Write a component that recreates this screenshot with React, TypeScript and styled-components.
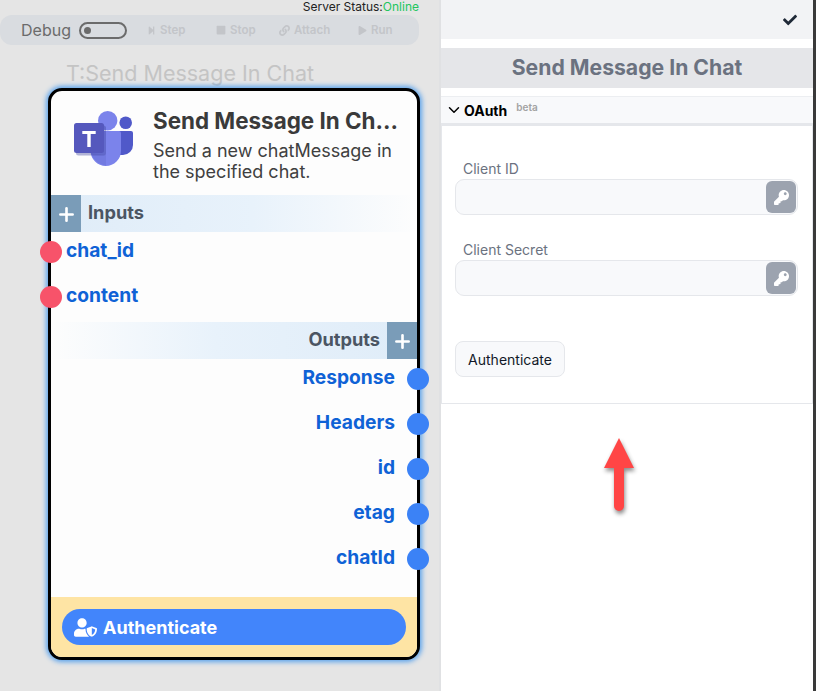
import React from 'react';
import styled, { createGlobalStyle } from 'styled-components';
import { Plus, ChevronDown } from 'lucide-react';
import { FaKey, FaUserShield, FaCheck, FaPlay, FaStop, FaLink, FaStepForward } from 'react-icons/fa';

const GlobalStyle = createGlobalStyle`
  html, body {
    margin: 0;
    padding: 0;
    height: 100%;
    overflow: hidden;
    font-family: Inter, "Liberation Sans", sans-serif;
  }
  #root { height: 100%; }
`;

const Page = styled.div`
  display: flex;
  width: 816px;
  height: 691px;
  background: #fff;
`;

const Canvas = styled.div`
  width: 439px;
  flex-shrink: 0;
  background: #e5e5e5;
  display: flex;
  flex-direction: column;
  border-right: 2px solid #e0e1e3;
`;

const ServerStatus = styled.div`
  height: 15px;
  padding-right: 20px;
  text-align: right;
  font-size: 12px;
  line-height: 14px;
  color: #222;
`;

const Online = styled.span`
  color: #22c55e;
`;

const DebugBar = styled.div`
  width: 419px;
  height: 30px;
  background: #d9dce0;
  border-radius: 12px;
  display: flex;
  align-items: center;
  padding-left: 21px;
  box-sizing: border-box;
`;

const DebugLabel = styled.span`
  font-size: 16px;
  color: #6b6b6b;
  margin-right: 8px;
`;

const Toggle = styled.div`
  width: 41px;
  height: 13px;
  border: 2px solid #6b6b6b;
  border-radius: 9px;
  display: flex;
  align-items: center;
  padding-left: 3px;
  margin-right: 20px;
`;

const ToggleKnob = styled.div`
  width: 7px;
  height: 7px;
  border-radius: 50%;
  background: #6b6b6b;
`;

const DebugAction = styled.span<{ $width: number }>`
  width: ${p => p.$width}px;
  display: flex;
  align-items: center;
  gap: 4px;
  font-size: 11.5px;
  font-weight: 600;
  color: #c3c5c9;
`;

const NodeTitle = styled.div`
  margin: 14px 0 0 66px;
  height: 29px;
  font-size: 21.5px;
  line-height: 29px;
  color: #c4c4c4;
`;

const NodeCard = styled.div`
  position: relative;
  margin-left: 48px;
  width: 372px;
  height: 572px;
  box-sizing: border-box;
  background: #fdfdfd;
  border: 3px solid #000;
  border-radius: 14px;
  box-shadow: 0 0 5px 2px #5ba3ec;
  display: flex;
  flex-direction: column;
`;

const NodeHead = styled.div`
  height: 104px;
  display: flex;
  flex-shrink: 0;
`;

const LogoBox = styled.div`
  width: 102px;
  flex-shrink: 0;
  padding: 20px 0 0 22px;
  box-sizing: border-box;
`;

const HeadText = styled.div`
  flex: 1;
  min-width: 0;
  padding-top: 16px;
  padding-right: 14px;
`;

const HeadTitle = styled.div`
  font-size: 22.4px;
  line-height: 28px;
  font-weight: 700;
  color: #3a3a3a;
  white-space: nowrap;
`;

const HeadDesc = styled.div`
  margin-top: 5px;
  font-size: 18px;
  line-height: 21px;
  color: #404040;
`;

const Section = styled.div<{ $right?: boolean }>`
  height: 37px;
  flex-shrink: 0;
  display: flex;
  align-items: center;
  justify-content: ${p => (p.$right ? 'flex-end' : 'flex-start')};
  background: linear-gradient(
    ${p => (p.$right ? 'to left' : 'to right')},
    #dfecf8,
    #e8f2fb 55%,
    #fdfdfd 100%
  );
`;

const SectionLabel = styled.span`
  font-size: 18.2px;
  font-weight: 700;
  color: #4b5563;
  margin: 0 7px 3px;
`;

const PlusBox = styled.div`
  width: 30px;
  height: 37px;
  box-sizing: border-box;
  padding-top: 2px;
  background: #7a9cb8;
  display: flex;
  align-items: center;
  justify-content: center;
  color: #fff;
`;

const Pins = styled.div<{ $right?: boolean }>`
  display: flex;
  flex-direction: column;
  gap: 15px;
  box-sizing: border-box;
  padding-top: 4px;
  height: ${p => (p.$right ? 238 : 90)}px;
  flex-shrink: 0;
`;

const Pin = styled.div<{ $right?: boolean }>`
  position: relative;
  height: 30px;
  line-height: 28px;
  font-size: 19.2px;
  font-weight: 700;
  color: #0f62d6;
  text-align: ${p => (p.$right ? 'right' : 'left')};
  padding: ${p => (p.$right ? '0 22px 0 0' : '0 0 0 15px')};
`;

const Dot = styled.div<{ $right?: boolean }>`
  position: absolute;
  top: 5px;
  width: 22px;
  height: 22px;
  border-radius: 50%;
  background: ${p => (p.$right ? '#3b82f6' : '#f7536a')};
  ${p => (p.$right ? 'right: -12px;' : 'left: -11px;')}
`;

const NodeFoot = styled.div`
  margin-top: auto;
  height: 60px;
  background: #fee4a4;
  border-radius: 0 0 11px 11px;
  display: flex;
  align-items: center;
  padding: 0 11px;
`;

const NodeAuth = styled.div`
  flex: 1;
  height: 36px;
  border-radius: 18px;
  background: #4285fb;
  display: flex;
  align-items: center;
  gap: 6px;
  padding-left: 12px;
  color: #fff;
  font-size: 18px;
  font-weight: 700;
`;

const Panel = styled.div`
  width: 372px;
  flex-shrink: 0;
  display: flex;
  flex-direction: column;
  background: #fff;
`;

const PanelTop = styled.div`
  height: 39px;
  background: #f2f3f5;
  display: flex;
  align-items: center;
  justify-content: flex-end;
  padding-right: 16px;
  color: #1f2937;
`;

const PanelTitle = styled.div`
  margin-top: 9px;
  height: 40px;
  background: #e5e6e9;
  text-align: center;
  font-size: 21.2px;
  line-height: 39px;
  font-weight: 700;
  color: #6b7280;
`;

const Accordion = styled.div`
  margin-top: 8px;
  height: 26px;
  background: #f8f9fb;
  border-top: 1px solid #eceef1;
  border-bottom: 3px solid #e5e7eb;
  display: flex;
  align-items: center;
  padding-left: 4px;
  color: #000;
`;

const AccordionLabel = styled.span`
  font-size: 14px;
  font-weight: 700;
  margin-left: 1px;
`;

const Beta = styled.span`
  align-self: flex-start;
  margin: 4px 0 0 9px;
  font-size: 10px;
  font-weight: 600;
  color: #a3a3a3;
`;

const AccordionBody = styled.div`
  height: 278px;
  box-sizing: border-box;
  border: 1px solid #e5e7eb;
  border-top: none;
  padding: 34px 14px 0 13px;
`;

const Field = styled.div`
  margin-bottom: 26px;
`;

const FieldLabel = styled.div`
  padding-left: 8px;
  height: 19px;
  font-size: 14px;
  line-height: 17px;
  color: #6b7280;
`;

const InputBox = styled.div`
  height: 36px;
  box-sizing: border-box;
  background: #f8f9fb;
  border: 1px solid #e5e7eb;
  border-radius: 9px;
  display: flex;
  justify-content: flex-end;
  padding: 1px;
`;

const KeyButton = styled.div`
  width: 30px;
  height: 32px;
  border-radius: 6px;
  background: #9ca3af;
  color: #fff;
  display: flex;
  align-items: center;
  justify-content: center;
`;

const AuthButton = styled.div`
  margin-top: 45px;
  width: 110px;
  height: 36px;
  box-sizing: border-box;
  background: #f8f9fb;
  border: 1px solid #e5e7eb;
  border-radius: 8px;
  display: flex;
  align-items: center;
  justify-content: center;
  font-size: 14px;
  color: #111827;
`;

const ArrowBox = styled.div`
  flex: 1;
  padding: 34px 0 0 163px;
`;

const Arrow = styled.svg`
  display: block;
  overflow: visible;
  filter: drop-shadow(1px 3px 2px rgba(0, 0, 0, 0.45));
`;

const Edge = styled.div`
  flex: 1;
  background: #3a3a3a;
`;

const TeamsLogo = () => (
  <svg width="60" height="55" viewBox="0 0 60 55">
    <circle cx="52.700" cy="11.700" r="6.300" fill="#5059c9" />
    <path d="M43 20h15a2 2 0 0 1 2 2v12a10 10 0 0 1-10 10h-7z" fill="#5059c9" />
    <circle cx="34.700" cy="9.700" r="9.700" fill="#7b83eb" />
    <path d="M19.500 20H46a2 2 0 0 1 2 2v17.800a15.200 15.200 0 0 1-30.400 0V22a2 2 0 0 1 2-2z" fill="#7b83eb" />
    <path d="M18 42c2.500 7 8 11.500 15 12.500L33 44z" fill="#6a71d6" opacity="0.5" />
    <rect x="3" y="14.500" width="30" height="30" rx="2.500" fill="#3f449b" opacity="0.4" />
    <rect x="1" y="12" width="30" height="30" rx="2.500" fill="#5558bd" />
    <path d="M22.700 20H9.300v3h5V36h3.400V23h5z" fill="#fff" />
  </svg>
);

const inputs = ['chat_id', 'content'];
const outputs = ['Response', 'Headers', 'id', 'etag', 'chatId'];

const App: React.FC = () => (
  <Page>
    <GlobalStyle />
    <Canvas>
      <ServerStatus>
        Server Status:<Online>Online</Online>
      </ServerStatus>
      <DebugBar>
        <DebugLabel>Debug</DebugLabel>
        <Toggle>
          <ToggleKnob />
        </Toggle>
        <DebugAction $width={69}><FaStepForward size={9} />Step</DebugAction>
        <DebugAction $width={63}><FaStop size={10} />Stop</DebugAction>
        <DebugAction $width={79}><FaLink size={11} />Attach</DebugAction>
        <DebugAction $width={50}><FaPlay size={9} />Run</DebugAction>
      </DebugBar>
      <NodeTitle>T:Send Message In Chat</NodeTitle>
      <NodeCard>
        <NodeHead>
          <LogoBox>
            <TeamsLogo />
          </LogoBox>
          <HeadText>
            <HeadTitle>Send Message In Ch...</HeadTitle>
            <HeadDesc>Send a new chatMessage in the specified chat.</HeadDesc>
          </HeadText>
        </NodeHead>
        <Section>
          <PlusBox><Plus size={21} strokeWidth={3} /></PlusBox>
          <SectionLabel>Inputs</SectionLabel>
        </Section>
        <Pins>
          {inputs.map(name => (
            <Pin key={name}>
              <Dot />
              {name}
            </Pin>
          ))}
        </Pins>
        <Section $right>
          <SectionLabel>Outputs</SectionLabel>
          <PlusBox><Plus size={21} strokeWidth={3} /></PlusBox>
        </Section>
        <Pins $right>
          {outputs.map(name => (
            <Pin key={name} $right>
              {name}
              <Dot $right />
            </Pin>
          ))}
        </Pins>
        <NodeFoot>
          <NodeAuth>
            <FaUserShield size={23} />
            Authenticate
          </NodeAuth>
        </NodeFoot>
      </NodeCard>
    </Canvas>
    <Panel>
      <PanelTop><FaCheck size={14} /></PanelTop>
      <PanelTitle>Send Message In Chat</PanelTitle>
      <Accordion>
        <ChevronDown size={18} strokeWidth={2} />
        <AccordionLabel>OAuth</AccordionLabel>
        <Beta>beta</Beta>
      </Accordion>
      <AccordionBody>
        <Field>
          <FieldLabel>Client ID</FieldLabel>
          <InputBox><KeyButton><FaKey size={15} /></KeyButton></InputBox>
        </Field>
        <Field>
          <FieldLabel>Client Secret</FieldLabel>
          <InputBox><KeyButton><FaKey size={15} /></KeyButton></InputBox>
        </Field>
        <AuthButton>Authenticate</AuthButton>
      </AccordionBody>
      <ArrowBox>
        <Arrow width="30" height="73" viewBox="0 0 30 73">
          <path d="M15 0 L30 30 H20 V68 a5 5 0 0 1-10 0 V30 H0 Z" fill="#ff4545" />
        </Arrow>
      </ArrowBox>
    </Panel>
    <Edge />
  </Page>
);

export default App;
